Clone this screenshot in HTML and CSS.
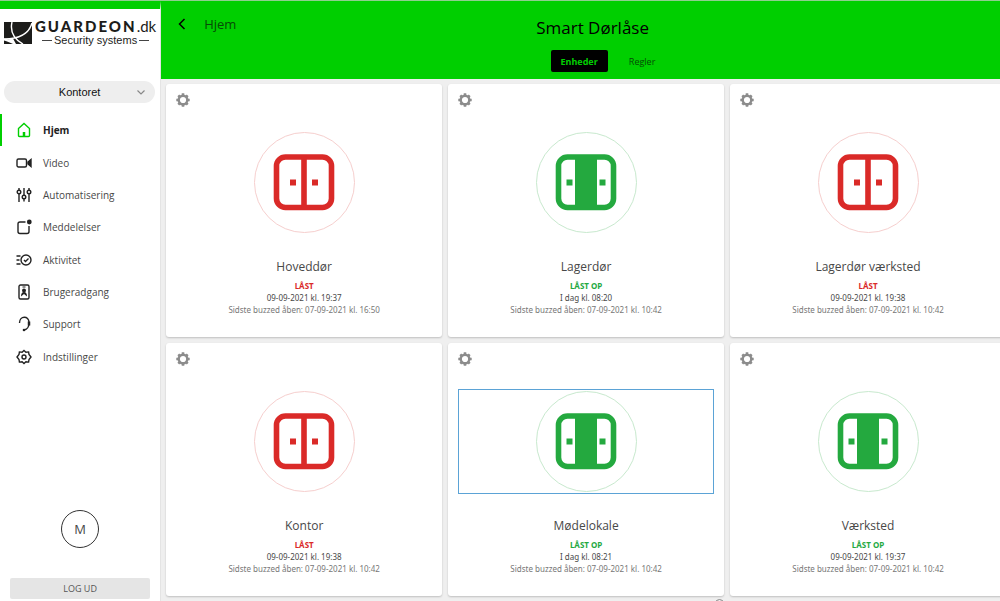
FILE: index.html
```html
<!DOCTYPE html>
<html lang="da">
<head>
  <meta charset="UTF-8">
  <meta name="viewport" content="width=device-width, initial-scale=1.0">
  <title>Smart Dørlåse</title>
  <link rel="stylesheet" href="styles.css">
</head>
<body>
  <!-- Shared icons -->
  <svg class="sprite" aria-hidden="true">
    <symbol id="gear" viewBox="0 0 14 14">
      <circle cx="7" cy="7" r="4.3" fill="none" stroke="currentColor" stroke-width="2.4"/>
      <path d="M7 .3v2.500M7 11.200v2.500M.3 7h2.500M11.200 7h2.500M2.300 2.300l2 2M9.700 9.700l2 2M2.300 11.700l2-2M9.700 4.300l2-2" stroke="currentColor" stroke-width="2.600"/>
    </symbol>
    <symbol id="locked" viewBox="0 0 62 57">
      <rect x="3.500" y="3" width="55" height="50.500" rx="9" fill="none" stroke="currentColor" stroke-width="5.600"/>
      <path d="M28.200 3h5.600v51h-5.600zM17 25.500h6v6h-6zM39 25.500h6v6h-6z" fill="currentColor"/>
    </symbol>
    <symbol id="unlocked" viewBox="0 0 62 57">
      <rect x="3.500" y="3" width="55" height="50.500" rx="9" fill="none" stroke="currentColor" stroke-width="5.600"/>
      <path d="M20 3h22v51h-22zM11.500 25.500h6v6h-6zM44.500 25.500h6v6h-6z" fill="currentColor"/>
    </symbol>
  </svg>

  <div class="app">
    <aside class="sidebar">
      <div class="logo">
        <svg width="28" height="22" viewBox="0 0 28 22">
          <rect width="28" height="22" fill="#1c1c1a"/>
          <path d="M8 0C6 9 10 17 19 22M28 1C25 12 16 17 0 17" fill="none" stroke="#fff" stroke-width="1.4"/>
          <path d="M0 16.500C3 17.500 6 17.500 9 16.500L12 22H9C5 20 2 19 0 18.500z" fill="#fff"/>
        </svg>
        <div class="logo-text">
          <div class="logo-name"><b>GUARDEON</b><span>.dk</span></div>
          <div class="logo-sub">Security systems</div>
        </div>
      </div>

      <div class="location">
        <select aria-label="Lokation">
          <option>Kontoret</option>
        </select>
        <svg width="8" height="5" viewBox="0 0 8 5"><path d="M.5.5L4 4 7.500.5" fill="none" stroke="#888" stroke-width="1.200"/></svg>
      </div>

      <nav class="menu">
        <a href="#" class="menu-item active">
          <svg viewBox="0 0 16 16"><path d="M2.500 6.500L8 1.500l5.500 5v7q0 1-1 1h-9q-1 0-1-1z"/><path d="M8 10v4.500" stroke-width="2.500"/></svg>
          <span>Hjem</span>
        </a>
        <a href="#" class="menu-item">
          <svg viewBox="0 0 16 16"><rect x="1" y="4" width="9.500" height="8" rx="1.500"/><path d="M12 7l3-2.500v7L12 9z" fill="currentColor"/></svg>
          <span>Video</span>
        </a>
        <a href="#" class="menu-item">
          <svg viewBox="0 0 16 16"><path d="M3 1v2M3 7v8M8 1v7M8 12v2.500M13 1v2M13 7v8"/><circle cx="3" cy="5" r="1.800"/><circle cx="8" cy="10" r="1.800"/><circle cx="13" cy="5" r="1.800"/></svg>
          <span>Automatisering</span>
        </a>
        <a href="#" class="menu-item">
          <svg viewBox="0 0 16 16"><path d="M9.500 3H4Q2 3 2 5v7.500q0 2 2 2h7q2 0 2-2V7"/><circle cx="13.300" cy="3" r="2.400" fill="currentColor" stroke="none"/></svg>
          <span>Meddelelser</span>
        </a>
        <a href="#" class="menu-item">
          <svg viewBox="0 0 16 16"><circle cx="10" cy="8" r="5"/><path d="M8 8l1.500 1.500 3-3M.5 4h4M.5 8h3M.5 12h4"/></svg>
          <span>Aktivitet</span>
        </a>
        <a href="#" class="menu-item">
          <svg viewBox="0 0 16 16"><rect x="3" y="1" width="10" height="14" rx="1.500"/><path d="M6.500 3h3" stroke-width="1"/><circle cx="8" cy="6.500" r="2" fill="currentColor" stroke="none"/><path d="M5 12.500q0-4.500 3-4.500t3 4.500L8 10z" fill="currentColor" stroke="none"/></svg>
          <span>Brugeradgang</span>
        </a>
        <a href="#" class="menu-item">
          <svg viewBox="0 0 16 16"><path d="M3.500 7C3.500-.5 13-.5 13 6.500 13 11 12 13 8 14"/><path d="M13 5.500v4" stroke-width="2.500"/><circle cx="8" cy="14" r="1.300" fill="currentColor" stroke="none"/></svg>
          <span>Support</span>
        </a>
        <a href="#" class="menu-item">
          <svg viewBox="0 0 16 16"><path d="M8 1.500l1.900 1.700 2.700-.3.400 2.600L15 8l-2 2.500-.4 2.600-2.700-.3L8 14.500l-1.900-1.700-2.700.3-.4-2.600L1 8l2-2.500.4-2.600 2.700.3z"/><circle cx="8" cy="8" r="2"/></svg>
          <span>Indstillinger</span>
        </a>
      </nav>

      <div class="avatar">M</div>
      <button class="logout">LOG UD</button>
    </aside>

    <main class="main">
      <header class="header">
        <a href="#" class="back">
          <svg width="8" height="12" viewBox="0 0 8 12"><path d="M6.500 1l-5 5 5 5" fill="none" stroke="#000" stroke-width="1.500"/></svg>
          <span>Hjem</span>
        </a>
        <div class="header-center">
          <h1>Smart Dørlåse</h1>
          <div class="tabs">
            <button class="tab active">Enheder</button>
            <button class="tab">Regler</button>
          </div>
        </div>
      </header>

      <div class="cards">
        <section class="card locked">
          <button class="settings" aria-label="Indstillinger"><svg><use href="#gear"/></svg></button>
          <button class="lock" aria-label="Hoveddør"><span class="ring"><svg><use href="#locked"/></svg></span></button>
          <h2>Hoveddør</h2>
          <p class="status">LÅST</p>
          <p class="time">09-09-2021 kl. 19:37</p>
          <p class="last">Sidste buzzed åben: 07-09-2021 kl. 16:50</p>
        </section>
        <section class="card unlocked">
          <button class="settings" aria-label="Indstillinger"><svg><use href="#gear"/></svg></button>
          <button class="lock" aria-label="Lagerdør"><span class="ring"><svg><use href="#unlocked"/></svg></span></button>
          <h2>Lagerdør</h2>
          <p class="status">LÅST OP</p>
          <p class="time">I dag kl. 08:20</p>
          <p class="last">Sidste buzzed åben: 07-09-2021 kl. 10:42</p>
        </section>
        <section class="card locked">
          <button class="settings" aria-label="Indstillinger"><svg><use href="#gear"/></svg></button>
          <button class="lock" aria-label="Lagerdør værksted"><span class="ring"><svg><use href="#locked"/></svg></span></button>
          <h2>Lagerdør værksted</h2>
          <p class="status">LÅST</p>
          <p class="time">09-09-2021 kl. 19:38</p>
          <p class="last">Sidste buzzed åben: 07-09-2021 kl. 10:42</p>
        </section>
        <section class="card locked">
          <button class="settings" aria-label="Indstillinger"><svg><use href="#gear"/></svg></button>
          <button class="lock" aria-label="Kontor"><span class="ring"><svg><use href="#locked"/></svg></span></button>
          <h2>Kontor</h2>
          <p class="status">LÅST</p>
          <p class="time">09-09-2021 kl. 19:38</p>
          <p class="last">Sidste buzzed åben: 07-09-2021 kl. 10:42</p>
        </section>
        <section class="card unlocked">
          <button class="settings" aria-label="Indstillinger"><svg><use href="#gear"/></svg></button>
          <button class="lock selected" aria-label="Mødelokale"><span class="ring"><svg><use href="#unlocked"/></svg></span></button>
          <h2>Mødelokale</h2>
          <p class="status">LÅST OP</p>
          <p class="time">I dag kl. 08:21</p>
          <p class="last">Sidste buzzed åben: 07-09-2021 kl. 10:42</p>
        </section>
        <section class="card unlocked">
          <button class="settings" aria-label="Indstillinger"><svg><use href="#gear"/></svg></button>
          <button class="lock" aria-label="Værksted"><span class="ring"><svg><use href="#unlocked"/></svg></span></button>
          <h2>Værksted</h2>
          <p class="status">LÅST OP</p>
          <p class="time">09-09-2021 kl. 19:37</p>
          <p class="last">Sidste buzzed åben: 07-09-2021 kl. 10:42</p>
        </section>
      </div>
      <div class="more"></div>
    </main>
  </div>
</body>
</html>
```
FILE: styles.css
```css
* {
  box-sizing: border-box;
}
body {
  margin: 0;
  font-family: "Open Sans", "Noto Sans", sans-serif;
  font-size: 10px;
  color: #484848;
  background-color: #efefef;
}
button, select {
  font-family: inherit;
  border: none;
  cursor: pointer;
}
a {
  color: inherit;
  text-decoration: none;
}
.sprite {
  display: none;
}
.app {
  display: flex;
  height: 100vh;
  overflow: hidden;
  border-top: 1px solid #8fce8f;
}

/* Sidebar */
.sidebar {
  display: flex;
  flex-direction: column;
  flex: 0 0 161px;
  border-top: 8px solid #00cf00;
  border-right: 1px solid #e4e4e4;
  background-color: #fff;
}
.logo {
  display: flex;
  align-items: center;
  gap: 3px;
  padding: 10px 4px 0;
  color: #1c1c1a;
}
.logo svg {
  flex: none;
}
.logo-name {
  display: flex;
  align-items: baseline;
  font-size: 15px;
  line-height: 15px;
  font-family: Lato, sans-serif;
}
.logo-name b {
  font-weight: 900;
  letter-spacing: 2px;
}
.logo-sub {
  display: flex;
  align-items: center;
  justify-content: center;
  gap: 2px;
  font-family: "Liberation Sans", sans-serif;
  font-size: 11px;
  line-height: 12px;
}
.logo-sub::before,
.logo-sub::after {
  content: "";
  width: 10px;
  height: 1px;
  background-color: #444;
}
.location {
  position: relative;
  margin: 35px 5px 0 4px;
}
.location select {
  display: block;
  width: 100%;
  height: 22px;
  padding: 0 4px;
  border-radius: 11px;
  background-color: #eee;
  color: #111;
  font-family: "Liberation Sans", sans-serif;
  font-size: 11px;
  text-align: center;
  text-align-last: center;
  appearance: none;
}
.location svg {
  position: absolute;
  right: 10px;
  top: 9px;
  pointer-events: none;
}
.menu {
  display: flex;
  flex-direction: column;
  height: 259px;
  margin-top: 11px;
}
.menu-item {
  display: flex;
  flex: 1;
  align-items: center;
  gap: 11px;
  padding-left: 14px;
  border-left: 2px solid transparent;
}
.menu-item svg {
  width: 16px;
  height: 16px;
  fill: none;
  stroke: currentColor;
  stroke-width: 1.4;
  color: #222;
}
.menu-item.active {
  border-left-color: #00cf00;
  color: #222;
  font-weight: bold;
}
.menu-item.active svg {
  color: #00cf00;
}
.avatar {
  display: flex;
  align-items: center;
  justify-content: center;
  width: 38px;
  height: 38px;
  margin: auto auto 0;
  border: 1px solid #333;
  border-radius: 50%;
  font-size: 13px;
}
.logout {
  height: 21px;
  margin: 30px 10px 2px;
  border-radius: 2px;
  background-color: #e5e5e5;
  color: #555;
  font-size: 9px;
}

/* Header */
.main {
  position: relative;
  flex: 1;
  min-width: 0;
  overflow: hidden;
}
.header {
  display: grid;
  grid-template-columns: 1fr auto 1fr;
  align-items: start;
  height: 78px;
  padding-left: 24px;
  background-color: #00cf00;
}
.back {
  display: flex;
  align-items: center;
  gap: 18px;
  margin-left: -24px;
  padding: 14px 17px;
  color: #064a06;
  font-size: 13px;
  line-height: 18px;
}
.header-center {
  padding-top: 16px;
  text-align: center;
}
h1 {
  margin: 0;
  color: #000;
  font-size: 17px;
  line-height: 22px;
  font-weight: normal;
}
.tabs {
  display: flex;
  justify-content: center;
  gap: 6px;
  margin-top: 11px;
  padding-left: 36px;
}
.tab {
  width: 57px;
  height: 22px;
  padding: 0;
  border-radius: 2px;
  background-color: transparent;
  color: #064a06;
  font-size: 9px;
}
.tab.active {
  background-color: #000;
  color: #00cf00;
  font-weight: bold;
}

/* Cards, the last column runs past the right edge */
.cards {
  display: grid;
  grid-template-columns: repeat(3, 1fr);
  gap: 6px;
  margin: 5px -6px 0 5px;
}
.card {
  display: flex;
  flex-direction: column;
  padding: 9px 10px 21px;
  border-radius: 3px;
  background-color: #fff;
  box-shadow: 0 1px 2px rgba(0, 0, 0, 0.2);
  text-align: center;
}
.card.locked {
  --status: #da2a28;
  --ring: #f6cfce;
}
.card.unlocked {
  --status: #24a93f;
  --ring: #c8e9ce;
}
.settings {
  align-self: flex-start;
  padding: 0;
  background: none;
  color: #8c8c8c;
}
.settings svg {
  display: block;
  width: 14px;
  height: 14px;
}
.lock {
  display: flex;
  justify-content: center;
  margin-top: 23px;
  padding: 1px;
  border: 1px solid transparent;
  background: none;
}
.lock.selected {
  border-color: #5ba3d6;
}
.ring {
  display: flex;
  align-items: center;
  justify-content: center;
  width: 101px;
  height: 101px;
  border: 1px solid var(--ring);
  border-radius: 50%;
}
.ring svg {
  width: 62px;
  height: 57px;
  color: var(--status);
}
.card h2 {
  margin: 23px 0 4px;
  font-size: 12px;
  line-height: 18px;
  font-weight: normal;
}
.card p {
  margin: 0;
  font-family: "Noto Sans", sans-serif;
  font-size: 8px;
  line-height: 12px;
}
.card .status {
  color: var(--status);
  font-weight: bold;
}
.card .last {
  color: #777;
}

/* Top of the round control peeking in below the cards */
.more {
  position: absolute;
  bottom: -7px;
  left: 66%;
  width: 9px;
  height: 9px;
  border: 1px solid #888;
  border-radius: 50%;
}
```
